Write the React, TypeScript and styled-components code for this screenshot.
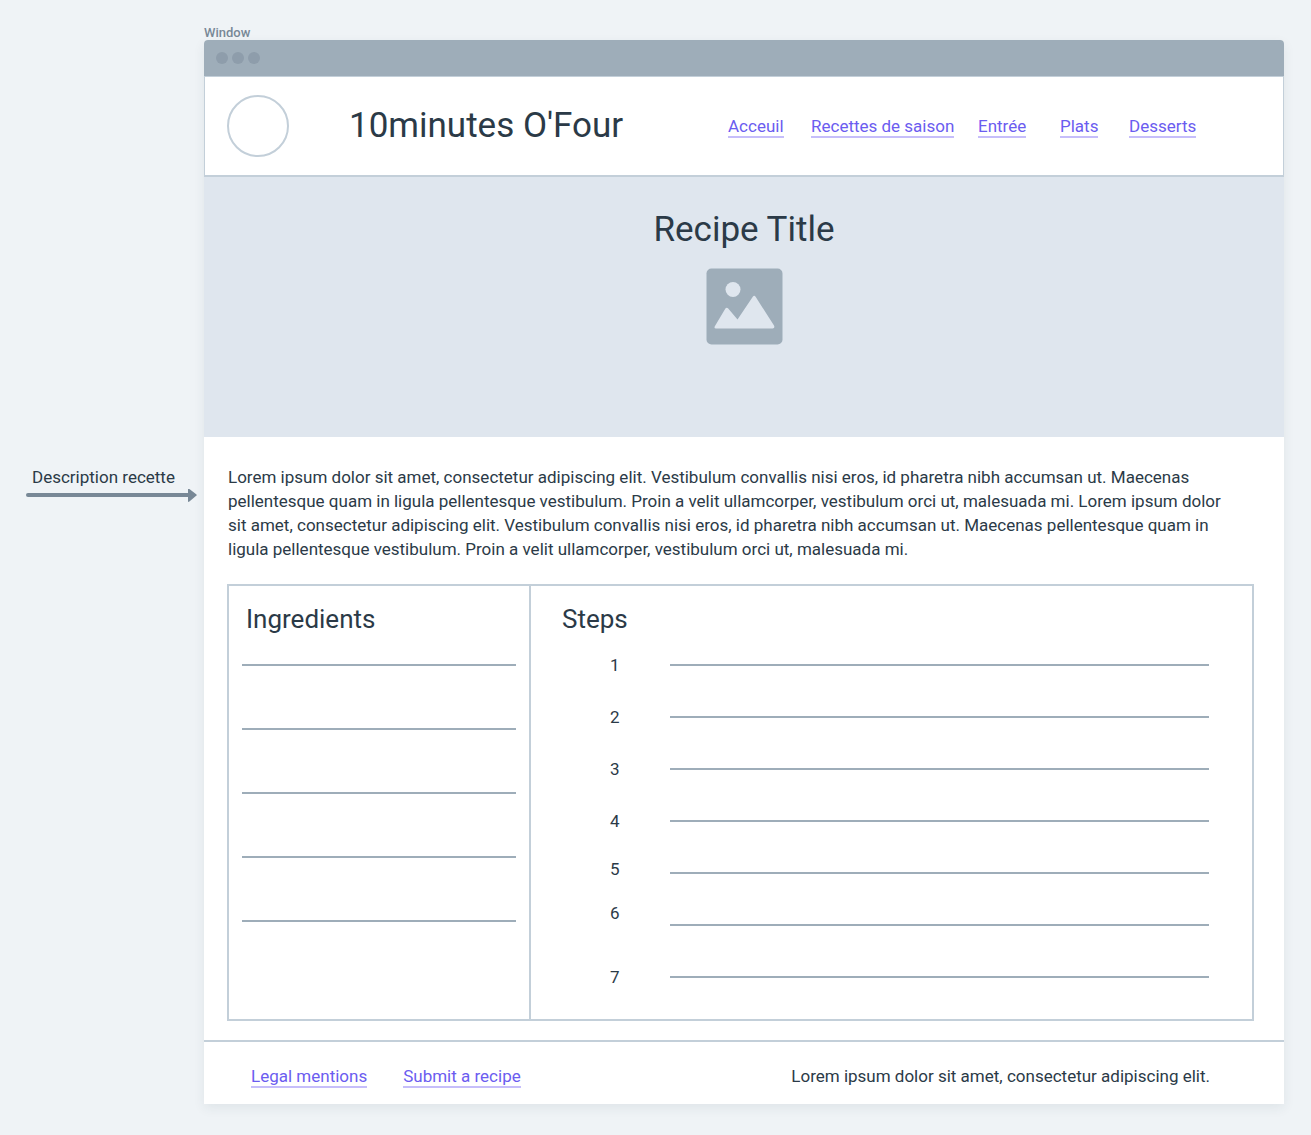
import React from "react";
import styled, { createGlobalStyle } from "styled-components";

const color = {
  page: "#eff3f6",
  ink: "#2b3a47",
  bar: "#9eadb9",
  dot: "#8e9dab",
  border: "#c3cfd9",
  hero: "#dfe6ee",
  muted: "#788896",
  link: "#6b5cf0",
  linkLine: "#c6befa",
};

const GlobalStyle = createGlobalStyle`
  *, *::before, *::after { box-sizing: border-box; }
  body {
    margin: 0;
    background: ${color.page};
    color: ${color.ink};
    font-family: Roboto, "Liberation Sans", sans-serif;
    font-size: 17px;
    line-height: 24px;
  }
  h1, h2, h3, p, ol, ul { margin: 0; padding: 0; font-weight: 400; }
`;

const Page = styled.div`
  display: grid;
  grid-template-columns: 204px minmax(0, 1fr);
  padding: 26px 27px 31px 0;
`;

const Annotation = styled.aside`
  padding: 439px 7px 0 26px;
`;

const AnnotationText = styled.p`
  padding-left: 6px;
  white-space: nowrap;
`;

const Arrow = styled.svg`
  display: block;
  width: 100%;
  height: 14px;
`;

const WindowLabel = styled.div`
  color: ${color.muted};
  font-size: 13px;
  font-weight: 500;
  line-height: 14px;
`;

const WindowFrame = styled.div`
  background: #fff;
  border-radius: 4px 4px 0 0;
  box-shadow: 0 4px 12px rgba(43, 58, 71, 0.08);
`;

const TitleBar = styled.div`
  display: flex;
  align-items: center;
  gap: 4px;
  height: 36px;
  padding-left: 12px;
  background: ${color.bar};
  border-radius: 4px 4px 0 0;
`;

const Dot = styled.span`
  width: 12px;
  height: 12px;
  border-radius: 50%;
  background: ${color.dot};
`;

const Header = styled.header`
  display: flex;
  align-items: center;
  height: 101px;
  padding: 0 84px 0 22px;
  border: 1px solid ${color.border};
  border-bottom-width: 2px;
`;

const Logo = styled.div`
  width: 62px;
  height: 62px;
  border: 2px solid ${color.border};
  border-radius: 50%;
`;

const SiteTitle = styled.h1`
  margin-left: 60px;
  font-size: 35px;
  line-height: 48px;
  white-space: nowrap;
`;

const Nav = styled.nav`
  display: grid;
  grid-template-columns: 83px 167px 82px 69px 70px;
  justify-items: start;
  margin-left: auto;
`;

const TextLink = styled.a`
  padding-top: 2px;
  border-bottom: 2px solid ${color.linkLine};
  color: ${color.link};
  line-height: 20px;
  text-decoration: none;
  white-space: nowrap;
`;

const Hero = styled.section`
  display: flex;
  flex-direction: column;
  align-items: center;
  gap: 14px;
  height: 260px;
  padding-top: 29px;
  background: ${color.hero};
`;

const HeroTitle = styled.h2`
  font-size: 35px;
  line-height: 48px;
`;

const Description = styled.p`
  padding: 28px 46px 0 24px;
`;

const Board = styled.section`
  display: grid;
  grid-template-columns: 302px minmax(0, 1fr);
  height: 437px;
  margin: 23px 30px 19px 23px;
  border: 2px solid ${color.border};
`;

const Ingredients = styled.div`
  padding: 17px 13px 0;
  border-right: 2px solid ${color.border};
`;

const Steps = styled.div`
  padding: 17px 43px 0 31px;
`;

const BoardTitle = styled.h3<{ $indent?: number }>`
  padding-left: ${(p) => p.$indent ?? 0}px;
  font-size: 26px;
  line-height: 32px;
`;

const Rules = styled.div<{ $gap: number }>`
  display: flex;
  flex-direction: column;
  gap: ${(p) => p.$gap}px;
  padding-top: 29px;
`;

const Rule = styled.hr`
  width: 100%;
  height: 2px;
  margin: 0;
  border: 0;
  background: ${color.bar};
`;

const StepsGrid = styled.div`
  display: grid;
  grid-template-columns: 60px minmax(0, 1fr);
  padding-left: 48px;
`;

const StepNumbers = styled.ol`
  display: grid;
  grid-template-rows: 52px 52px 52px 48px 44px 64px 24px;
  padding-top: 18px;
  list-style: none;
`;

const Footer = styled.footer`
  display: flex;
  justify-content: space-between;
  height: 64px;
  padding: 22px 74px 0 47px;
  border-top: 2px solid ${color.border};
`;

const FooterLinks = styled.nav`
  display: flex;
  align-items: flex-start;
  gap: 36px;
`;

const navItems = ["Acceuil", "Recettes de saison", "Entrée", "Plats", "Desserts"];
const footerItems = ["Legal mentions", "Submit a recipe"];
const ingredientLines = [1, 2, 3, 4, 5];
const steps = [1, 2, 3, 4, 5, 6, 7];

function PictureIcon() {
  return (
    <svg width="77" height="77" viewBox="0 0 77 77" aria-hidden="true">
      <rect x="0.5" y="0.5" width="76" height="76" rx="5" fill={color.bar} />
      <circle cx="27" cy="21.5" r="7.5" fill={color.hero} />
      <path
        d="M9 58L19.4 40.6Q20.8 38.8 22.2 40.6L31.5 51.5L46.8 28.8Q48.2 26.8 49.6 28.8L68 57.6Q69.2 60.4 66.6 60.4H10Q7.6 60.4 9 58Z"
        fill={color.hero}
      />
    </svg>
  );
}

export default function App() {
  return (
    <>
      <GlobalStyle />
      <Page>
        <Annotation>
          <AnnotationText>Description recette</AnnotationText>
          <Arrow viewBox="0 0 171 14" preserveAspectRatio="xMaxYMid meet" aria-hidden="true">
            <path d="M2 6H164" stroke={color.muted} strokeWidth="4" strokeLinecap="round" />
            <path d="M162 0.5Q162 -0.8 163.4 0L170.2 5.2Q171.4 6 170.2 6.8L163.4 12.6Q162 13.6 162 12.2Z" fill={color.muted} />
          </Arrow>
        </Annotation>
        <main>
          <WindowLabel>Window</WindowLabel>
          <WindowFrame>
            <TitleBar>
              <Dot />
              <Dot />
              <Dot />
            </TitleBar>
            <Header>
              <Logo />
              <SiteTitle>10minutes O'Four</SiteTitle>
              <Nav>
                {navItems.map((item) => (
                  <TextLink href="#" key={item}>{item}</TextLink>
                ))}
              </Nav>
            </Header>
            <Hero>
              <HeroTitle>Recipe Title</HeroTitle>
              <PictureIcon />
            </Hero>
            <Description>
              Lorem ipsum dolor sit amet, consectetur adipiscing elit. Vestibulum convallis nisi eros, id pharetra nibh accumsan ut. Maecenas pellentesque quam in ligula pellentesque vestibulum. Proin a velit ullamcorper, vestibulum orci ut, malesuada mi. Lorem ipsum dolor sit amet, consectetur adipiscing elit. Vestibulum convallis nisi eros, id pharetra nibh accumsan ut. Maecenas pellentesque quam in ligula pellentesque vestibulum. Proin a velit ullamcorper, vestibulum orci ut, malesuada mi.
            </Description>
            <Board>
              <Ingredients>
                <BoardTitle $indent={4}>Ingredients</BoardTitle>
                <Rules $gap={62}>
                  {ingredientLines.map((n) => <Rule key={n} />)}
                </Rules>
              </Ingredients>
              <Steps>
                <BoardTitle>Steps</BoardTitle>
                <StepsGrid>
                  <StepNumbers>
                    {steps.map((n) => <li key={n}>{n}</li>)}
                  </StepNumbers>
                  <Rules $gap={50}>
                    {steps.map((n) => <Rule key={n} />)}
                  </Rules>
                </StepsGrid>
              </Steps>
            </Board>
            <Footer>
              <FooterLinks>
                {footerItems.map((item) => (
                  <TextLink href="#" key={item}>{item}</TextLink>
                ))}
              </FooterLinks>
              <p>Lorem ipsum dolor sit amet, consectetur adipiscing elit.</p>
            </Footer>
          </WindowFrame>
        </main>
      </Page>
    </>
  );
}
